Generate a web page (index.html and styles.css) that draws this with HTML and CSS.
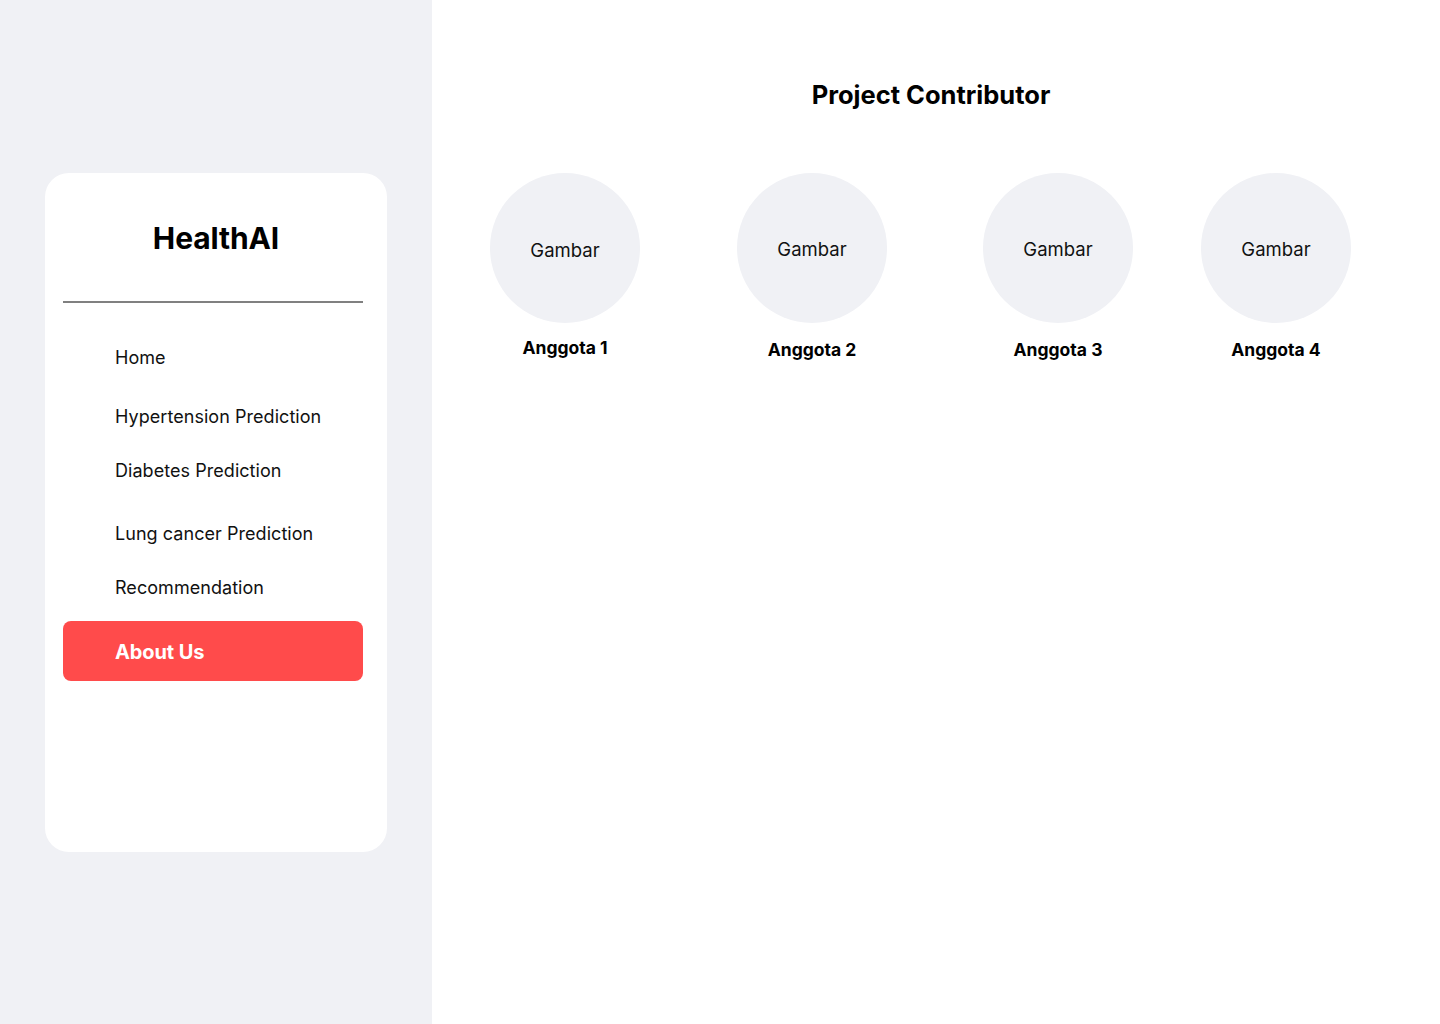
FILE: index.html
```html
<!DOCTYPE html>
<html lang="id">
<head>
<meta charset="utf-8">
<title>HealthAI - About Us</title>
<link rel="stylesheet" href="styles.css">
</head>
<body>
<div class="layout">
  <aside class="sidebar">
    <div class="card">
      <h1 class="brand">HealthAI</h1>
      <hr class="divider">
      <nav class="nav">
        <a class="nav-item nav-home" href="#">Home</a>
        <a class="nav-item nav-hyper" href="#">Hypertension Prediction</a>
        <a class="nav-item nav-diab" href="#">Diabetes Prediction</a>
        <a class="nav-item nav-lung" href="#">Lung cancer Prediction</a>
        <a class="nav-item nav-rec" href="#">Recommendation</a>
        <a class="nav-item nav-active" href="#">About Us</a>
      </nav>
    </div>
  </aside>
  <main class="main">
    <h2 class="title">Project Contributor</h2>
    <div class="members">
      <div class="member m1">
        <div class="avatar">Gambar</div>
        <div class="name">Anggota 1</div>
      </div>
      <div class="member">
        <div class="avatar">Gambar</div>
        <div class="name">Anggota 2</div>
      </div>
      <div class="member">
        <div class="avatar">Gambar</div>
        <div class="name">Anggota 3</div>
      </div>
      <div class="member">
        <div class="avatar">Gambar</div>
        <div class="name">Anggota 4</div>
      </div>
    </div>
  </main>
</div>
</body>
</html>
```

FILE: styles.css
```css
* { box-sizing: border-box; }
html, body { margin: 0; padding: 0; }
body {
  font-family: Inter, "Noto Sans", "Liberation Sans", sans-serif;
  color: #000;
  background: #fff;
}
.layout {
  display: flex;
  width: 1440px;
  height: 1024px;
}
.sidebar {
  width: 432px;
  flex: none;
  background: #f0f1f5;
  padding: 173px 45px 0 45px;
}
.card {
  width: 342px;
  height: 679px;
  background: #fff;
  border-radius: 24px;
  padding: 46px 24px 0 18px;
}
.brand {
  margin: 0;
  text-align: center;
  font-size: 30px;
  font-weight: 700;
  line-height: 38px;
  letter-spacing: -0.1px;
  padding-left: 6px;
}
.divider {
  margin: 44px 0 0 0;
  border: 0;
  height: 2px;
  background: #808080;
}
.nav {
  display: flex;
  flex-direction: column;
  margin-top: 43px;
}
.nav-item {
  display: block;
  color: #111;
  text-decoration: none;
  font-size: 18px;
  line-height: 24px;
  padding-left: 52px;
  letter-spacing: 0.05px;
}
.nav-hyper { margin-top: 35px; }
.nav-diab { margin-top: 30px; }
.nav-lung { margin-top: 39px; }
.nav-rec { margin-top: 30px; }
.nav-active {
  margin-top: 21px;
  height: 60px;
  padding-top: 2px;
  line-height: 58px;
  background: #ff4b4b;
  color: #fff;
  border-radius: 8px;
  font-weight: 700;
  font-size: 20px;
  letter-spacing: -0.1px;
}
.main {
  flex: 1;
  padding-top: 78px;
}
.title {
  margin: 0;
  text-align: center;
  font-size: 25.5px;
  font-weight: 700;
  line-height: 34px;
  letter-spacing: 0;
  padding-right: 10px;
}
.members {
  display: grid;
  grid-template-columns: 247px 246px 218px 150px;
  margin: 61px 0 0 58px;
}
.member {
  width: 150px;
  display: flex;
  flex-direction: column;
  align-items: center;
}
.avatar {
  width: 150px;
  height: 150px;
  border-radius: 50%;
  background: #f0f1f5;
  display: flex;
  align-items: center;
  justify-content: center;
  padding-top: 2px;
  font-size: 18.5px;
  color: #111;
  letter-spacing: 0;
}
.name {
  margin-top: 15px;
  font-size: 17.5px;
  font-weight: 700;
  line-height: 24px;
  letter-spacing: 0;
}
.m1 .avatar { padding-top: 4px; }
.m1 .name { margin-top: 13px; }
```
